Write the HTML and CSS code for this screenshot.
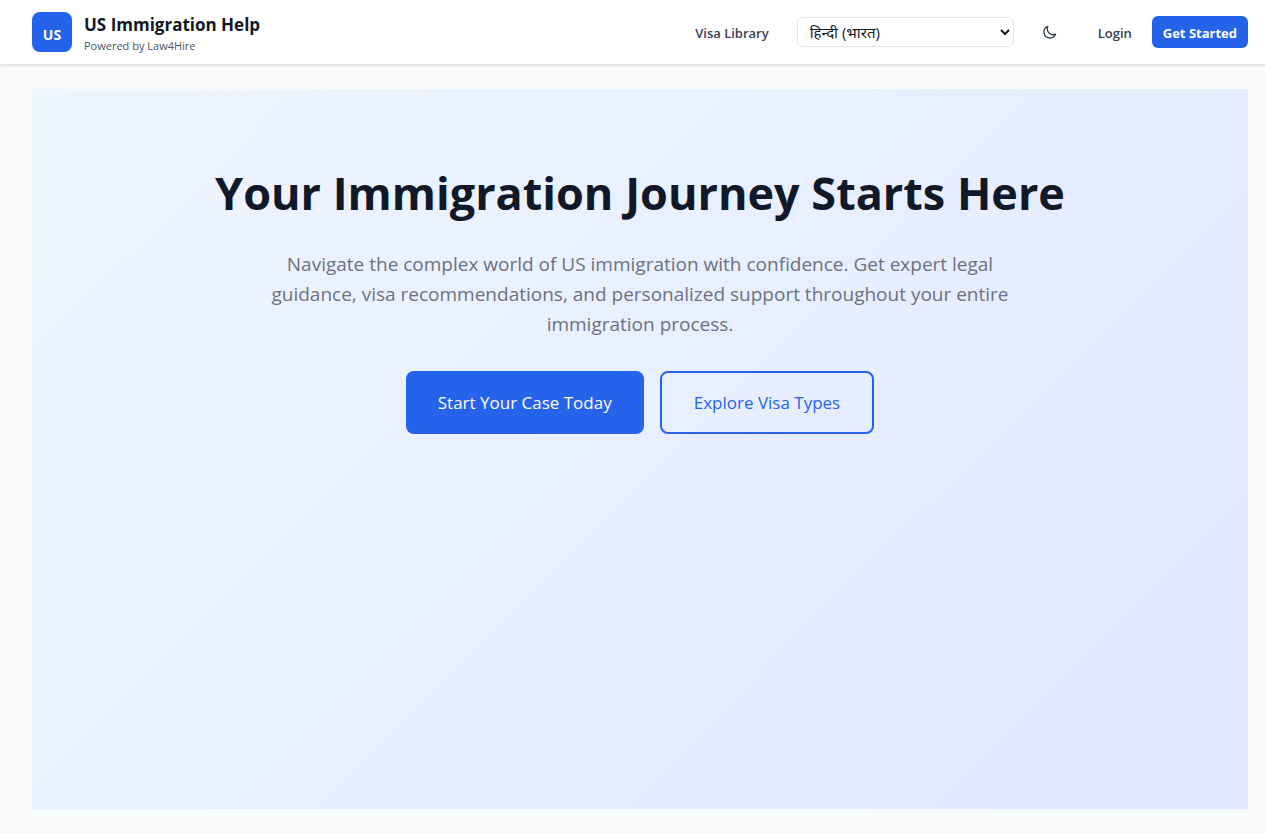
FILE: index.html
```html
<!DOCTYPE html>
<html lang="en">
<head>
<meta charset="utf-8">
<meta name="viewport" content="width=device-width, initial-scale=1">
<title>US Immigration Help</title>
<link rel="stylesheet" href="styles.css">
</head>
<body>
<header class="topbar">
  <a class="brand" href="#">
    <span class="logo">US</span>
    <span class="brand-text">
      <span class="brand-name">US Immigration Help</span>
      <span class="brand-sub">Powered by Law4Hire</span>
    </span>
  </a>
  <nav class="nav">
    <a class="nav-link" href="#">Visa Library</a>
    <select class="language" aria-label="Language">
      <option>हिन्दी (भारत)</option>
    </select>
    <button class="theme" type="button" aria-label="Toggle dark mode">
      <svg viewBox="0 0 24 24" width="16" height="16" fill="none" stroke="currentColor" stroke-width="2" stroke-linecap="round" stroke-linejoin="round"><path d="M20.354 15.354A9 9 0 018.646 3.646 9.003 9.003 0 0012 21a9.003 9.003 0 008.354-5.646z"/></svg>
    </button>
    <button class="login" type="button">Login</button>
    <button class="signup" type="button">Get Started</button>
  </nav>
</header>
<main class="page">
  <section class="hero">
    <h1 class="title">Your Immigration Journey Starts Here</h1>
    <p class="lead">Navigate the complex world of US immigration with confidence. Get expert legal guidance, visa recommendations, and personalized support throughout your entire immigration process.</p>
    <div class="actions">
      <button class="cta cta-primary" type="button">Start Your Case Today</button>
      <button class="cta cta-outline" type="button">Explore Visa Types</button>
    </div>
  </section>
</main>
</body>
</html>
```
FILE: styles.css
```css
* { box-sizing: border-box; }
body {
  margin: 0;
  min-height: 100vh;
  display: flex;
  flex-direction: column;
  background: #f9fafb;
  color: #111827;
  font-family: "Open Sans", "Noto Sans", sans-serif;
}
button, select { font-family: inherit; margin: 0; }
a { color: inherit; text-decoration: none; }
.topbar {
  display: flex;
  align-items: center;
  justify-content: space-between;
  padding: 9px 17px 9px 32px;
  border-bottom: 1px solid #e5e7eb;
  background: #fff;
  box-shadow: 0 1px 2px rgba(0, 0, 0, .1);
}
.brand { display: flex; align-items: center; gap: 12px; }
.logo {
  display: grid;
  place-items: center;
  width: 40px;
  height: 40px;
  padding-top: 4px;
  border-radius: 8px;
  background: #2563eb;
  color: #fff;
  font-size: 14px;
  font-weight: 700;
}
.brand-text { display: flex; flex-direction: column; padding-top: 4px; }
.brand-name { font-size: 17px; line-height: 24px; font-weight: 700; }
.brand-sub { font-size: 11px; line-height: 18px; color: #4b5563; }
.nav { display: flex; align-items: center; font-size: 13px; font-weight: 600; color: #374151; }
.nav-link { margin-right: 28px; padding-top: 2px; }
.language {
  width: 217px;
  height: 30px;
  padding: 0 0 0 8px;
  border: 1px solid #e5e7eb;
  border-radius: 6px;
  background: #fff;
  color: #111827;
  font-size: 15px;
}
.theme {
  display: grid;
  place-items: center;
  width: 32px;
  height: 32px;
  margin: 0 20px;
  padding: 0;
  border: 0;
  background: none;
  color: #374151;
}
.login, .signup { height: 32px; padding: 2px 12px 0; border: 0; border-radius: 6px; font-size: 13px; font-weight: 600; }
.login { margin-right: 8px; background: none; color: #374151; }
.signup { padding: 2px 11px 0; background: #2563eb; color: #fff; font-weight: 700; }
.page { flex: 1; display: flex; padding: 24px 17px 24px 32px; }
.hero {
  flex: 1;
  padding: 72px 32px;
  background: linear-gradient(135deg, #eff6ff, #e0e7ff);
  text-align: center;
}
.title { margin: 0; font-size: 45px; line-height: 64px; font-weight: 700; }
.lead { max-width: 768px; margin: 24px auto; font-size: 19px; line-height: 30px; color: #6b7280; }
.actions { display: flex; justify-content: center; gap: 16px; margin-top: 32px; }
.cta { padding: 18px 32px; border: 0; border-radius: 8px; font-size: 17px; line-height: 27px; }
.cta-primary { background: #2563eb; color: #fff; }
.cta-outline { padding: 16px 32px; border: 2px solid #2563eb; background: transparent; color: #2563eb; }
```
